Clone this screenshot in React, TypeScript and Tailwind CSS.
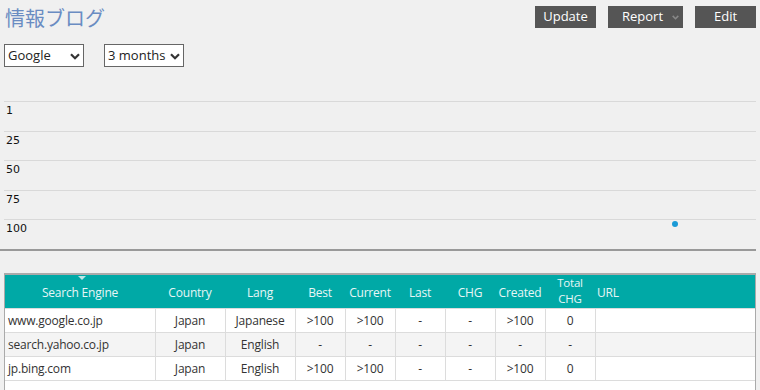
import React from 'react';

const font = { fontFamily: '"Open Sans", "Noto Sans", sans-serif' };

const rows = [
  { engine: 'www.google.co.jp', country: 'Japan', lang: 'Japanese', best: '>100', current: '>100', last: '-', chg: '-', created: '>100', total: '0' },
  { engine: 'search.yahoo.co.jp', country: 'Japan', lang: 'English', best: '-', current: '-', last: '-', chg: '-', created: '-', total: '-' },
  { engine: 'jp.bing.com', country: 'Japan', lang: 'English', best: '>100', current: '>100', last: '-', chg: '-', created: '>100', total: '0' },
];

const Chevron = ({ className }: { className?: string }) => (
  <svg viewBox="0 0 10 7" className={className} fill="none">
    <path d="M1 1.2 L5 5.2 L9 1.2" stroke="currentColor" strokeWidth="2.2" />
  </svg>
);

const Select = ({ value, width }: { value: string; width: string }) => (
  <div className={`relative h-[23px] ${width} border border-[#666] bg-white`}>
    <div className="pl-[3px] text-[13px] leading-[21px] text-[#222]">{value}</div>
    <Chevron className="absolute top-[8px] right-[3px] h-[7px] w-[10px] text-[#333]" />
  </div>
);

export default function App() {
  const ticks = ['1', '25', '50', '75', '100'];
  return (
    <div className="h-[390px] w-[760px] overflow-hidden bg-[#f0f0f0]" style={font}>
      <div className="flex items-start justify-between pt-[6px] pr-[4px] pl-[5px]">
        <h1
          className="text-[20px] leading-[24px] text-[#6a8cc2]"
          style={{ fontFamily: '"Noto Sans CJK JP", sans-serif' }}
        >
          情報ブログ
        </h1>
        <div className="flex gap-[12px]">
          <button className="h-[22px] w-[61px] bg-[#555] text-[13px] text-white">Update</button>
          <button className="relative h-[22px] w-[75px] bg-[#555] text-[13px] text-white">
            <span className="mr-[6px]">Report</span>
            <Chevron className="absolute top-[9px] right-[4px] h-[5px] w-[7px] text-[#888]" />
          </button>
          <button className="h-[22px] w-[61px] bg-[#555] text-[13px] text-white">Edit</button>
        </div>
      </div>

      <div className="mt-[14px] flex gap-[20px] pl-[4px]">
        <Select value="Google" width="w-[80px]" />
        <Select value="3 months" width="w-[80px]" />
      </div>

      <div className="relative mt-[34px] mr-[4px] ml-[4px]">
        {ticks.map((t) => (
          <div key={t} className="h-[29.5px] border-t border-[#d9d9d9]">
            <div
              className="pt-[2px] pl-[2px] leading-[14px] text-[#111]"
              style={{ fontFamily: '"DejaVu Sans", sans-serif', fontSize: '11px' }}
            >
              {t}
            </div>
          </div>
        ))}
        <div className="-ml-[4px] border-t-2 border-[#999]" />
        <div className="absolute top-[120px] left-[668px] h-[6px] w-[6px] rounded-full bg-[#1a9ad6]" />
      </div>

      <div className="mt-[22px] mr-[4px] ml-[4px] h-[120px] border-x border-t-2 border-[#aaa] bg-white">
        <table className="w-full table-fixed border-collapse text-[12px] tracking-[-0.2px] text-[#333]">
          <colgroup>
            <col className="w-[150px]" />
            <col className="w-[70px]" />
            <col className="w-[70px]" />
            <col className="w-[50px]" />
            <col className="w-[50px]" />
            <col className="w-[50px]" />
            <col className="w-[50px]" />
            <col className="w-[50px]" />
            <col className="w-[50px]" />
            <col />
          </colgroup>
          <thead>
            <tr className="h-[34px] bg-[#00a9a6] text-[12px] leading-[15px] font-normal text-[#e8f6f6]">
              <th className="relative pt-[2px] font-normal">
                <span className="absolute top-[1px] left-[73px] h-0 w-0 border-x-[4px] border-t-[4px] border-x-transparent border-t-[#bfe6e6]" />
                Search Engine
              </th>
              <th className="pt-[2px] font-normal">Country</th>
              <th className="pt-[2px] font-normal">Lang</th>
              <th className="pt-[2px] font-normal">Best</th>
              <th className="pt-[2px] font-normal">Current</th>
              <th className="pt-[2px] font-normal">Last</th>
              <th className="pt-[2px] font-normal">CHG</th>
              <th className="pt-[2px] font-normal">Created</th>
              <th className="p-0 font-normal">
                <div className="flex flex-col items-center text-[11.5px] leading-[16.5px]">
                  <span>Total</span>
                  <span>CHG</span>
                </div>
              </th>
              <th className="pt-[2px] pl-[2px] text-left font-normal">URL</th>
            </tr>
          </thead>
          <tbody>
            {rows.map((r, i) => (
              <tr key={r.engine} className={i % 2 === 1 ? 'h-[24px] bg-[#f4f4f4]' : 'h-[24px] bg-white'}>
                <td className="border border-l-0 border-[#dcdcdc] pl-[3px]">{r.engine}</td>
                <td className="border border-[#dcdcdc] text-center">{r.country}</td>
                <td className="border border-[#dcdcdc] text-center">{r.lang}</td>
                <td className="border border-[#dcdcdc] text-center">{r.best}</td>
                <td className="border border-[#dcdcdc] text-center">{r.current}</td>
                <td className="border border-[#dcdcdc] text-center">{r.last}</td>
                <td className="border border-[#dcdcdc] text-center">{r.chg}</td>
                <td className="border border-[#dcdcdc] text-center">{r.created}</td>
                <td className="border border-[#dcdcdc] text-center">{r.total}</td>
                <td className="border border-r-0 border-[#dcdcdc]" />
              </tr>
            ))}
          </tbody>
        </table>
      </div>
    </div>
  );
}
